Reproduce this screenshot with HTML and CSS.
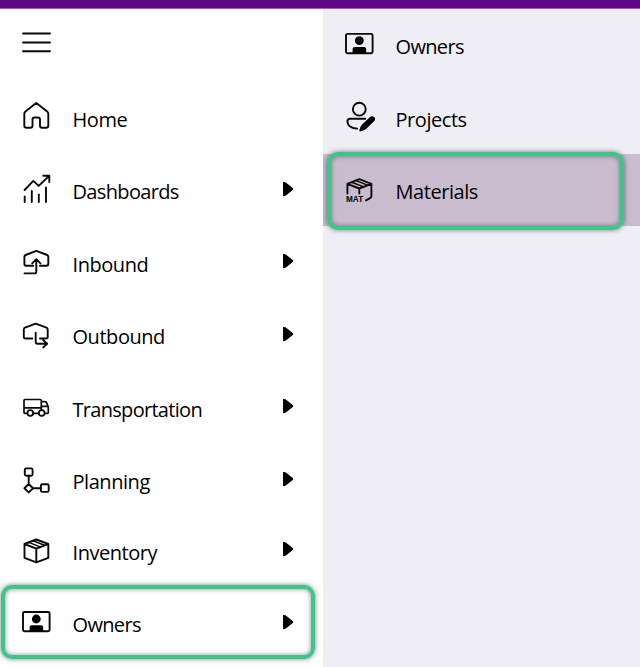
FILE: index.html
```html
<!DOCTYPE html>
<html lang="en">
<head>
<meta charset="utf-8">
<title>Navigation</title>
<link rel="stylesheet" href="styles.css">
</head>
<body>
<div class="topbar"></div>
<div class="menus">
  <nav class="menu primary">
    <div class="item"><svg class="icon" viewBox="0 0 36 36"><path d="M5 6.5H32M5 15.5H32M5 24.2H32"/></svg></div>
    <div class="item even"><svg class="icon" viewBox="0 0 36 36"><path d="M18.3 3 7.4 11.5Q6.3 12.4 6.3 14V25.7Q6.3 27.8 8.4 27.8H12.4Q14.5 27.8 14.5 25.7V19.5Q14.5 17.5 16.5 17.5H20Q22 17.5 22 19.5V25.7Q22 27.8 24.1 27.8H28.1Q30.3 27.8 30.3 25.7V14Q30.3 12.4 29.2 11.5Z"/></svg><span class="label">Home</span></div>
    <div class="item"><svg class="icon" viewBox="0 0 36 36"><path d="M6.7 24.5V30M13.8 19V30M20.8 22.5V30M28 15.5V30M6.6 18 15.3 8.9 20.7 13.9 31 4M25.3 3.8H31.3V10"/></svg><span class="label tight">Dashboards</span><svg class="caret" viewBox="0 0 12 16"><path d="M1 1V15Q3 15.5 4.5 14L11 8.7Q11.6 8 11 7.3L4.5 2Q3 .5 1 1Z"/></svg></div>
    <div class="item even"><svg class="icon" viewBox="0 0 36 36"><path d="M15.3 20.7H8.2Q6.4 20.7 6.4 19V12Q6.4 10.5 7.6 10L18.3 5.9 29.2 10Q30.3 10.5 30.3 12V19Q30.3 20.7 28.5 20.7H22M6.5 28.4H16.6Q18.3 28.4 18.3 26.5V14.5M14.2 18.3 18.3 14.2 22.4 18.3"/></svg><span class="label">Inbound</span><svg class="caret" viewBox="0 0 12 16"><path d="M1 1V15Q3 15.5 4.5 14L11 8.7Q11.6 8 11 7.3L4.5 2Q3 .5 1 1Z"/></svg></div>
    <div class="item"><svg class="icon" viewBox="0 0 36 36"><path d="M14.3 21.5H7.6Q5.8 21.5 5.8 19.7V12.7Q5.8 11.2 7 10.7L17.7 6.6 28.5 10.7Q29.7 11.2 29.7 12.7V19.7Q29.7 21.5 27.9 21.5H22M17.7 15.7V24.8Q17.7 26.7 19.5 26.7H29.2M25.2 23.2 29.2 26.8 25.2 30.4"/></svg><span class="label">Outbound</span><svg class="caret" viewBox="0 0 12 16"><path d="M1 1V15Q3 15.5 4.5 14L11 8.7Q11.6 8 11 7.3L4.5 2Q3 .5 1 1Z"/></svg></div>
    <div class="item even"><svg class="icon thin" viewBox="0 0 36 36"><path d="M9.3 23.3H6.8Q6 23.3 6 22.3V10.5Q6 9.5 7 9.5H22.3Q23.3 9.5 23.3 10.5V19.5M15.3 23.3H20.6M6 17.9H23.3M23.3 11.6H27.2Q28.1 11.6 28.5 12.6L30.3 17V22.3Q30.3 23.3 29.5 23.3H26.8M23.3 16.4H30"/><circle cx="12.3" cy="23" r="2.9"/><circle cx="23.7" cy="23" r="2.9"/></svg><span class="label tighter">Transportation</span><svg class="caret" viewBox="0 0 12 16"><path d="M1 1V15Q3 15.5 4.5 14L11 8.7Q11.6 8 11 7.3L4.5 2Q3 .5 1 1Z"/></svg></div>
    <div class="item short"><svg class="icon" viewBox="0 0 36 36"><rect x="6.8" y="6.4" width="7.8" height="7.4" rx="1.5"/><path d="M10.7 13.8V22M15 26.2H22.7M10.7 22 15 26.2 10.7 30.4 6.4 26.2Z"/><rect x="22.9" y="22.3" width="7.8" height="7.6" rx="1.5"/></svg><span class="label">Planning</span><svg class="caret" viewBox="0 0 12 16"><path d="M1 1V15Q3 15.5 4.5 14L11 8.7Q11.6 8 11 7.3L4.5 2Q3 .5 1 1Z"/></svg></div>
    <div class="item medium"><svg class="icon" viewBox="0 0 36 36"><path d="M18.3 6.5 30.3 11V24.8L18.3 29.3 6.5 24.8V11ZM6.5 11 18.3 15.7 30.3 11M18.3 15.7V29"/><path class="seam" d="M15 7.8 26.5 12.2M10.8 9.4 22.2 13.9"/></svg><span class="label">Inventory</span><svg class="caret high" viewBox="0 0 12 16"><path d="M1 1V15Q3 15.5 4.5 14L11 8.7Q11.6 8 11 7.3L4.5 2Q3 .5 1 1Z"/></svg></div>
    <div class="item medium outlined"><svg class="icon" viewBox="0 0 36 36"><rect x="5" y="7" width="26.6" height="19.3" rx="1.5"/><circle class="fill" cx="18.3" cy="14" r="4.4"/><path class="fill" d="M11.6 26.5V22.4Q11.6 20.2 13.8 20.2H23Q25.2 20.2 25.2 22.4V26.5Z"/></svg><span class="label tight">Owners</span><svg class="caret" viewBox="0 0 12 16"><path d="M1 1V15Q3 15.5 4.5 14L11 8.7Q11.6 8 11 7.3L4.5 2Q3 .5 1 1Z"/></svg></div>
  </nav>
  <nav class="menu secondary">
    <div class="item"><svg class="icon" viewBox="0 0 36 36"><rect x="5" y="6.9" width="26.6" height="19.3" rx="1.5"/><circle class="fill" cx="18.3" cy="13.7" r="4.4"/><path class="fill" d="M11.6 26.2V22.1Q11.6 19.9 13.8 19.9H23Q25.2 19.9 25.2 22.1V26.2Z"/></svg><span class="label tight">Owners</span></div>
    <div class="item even"><svg class="icon" viewBox="0 0 36 36"><circle cx="18.3" cy="9.2" r="6.4"/><path d="M24.3 18.7H9Q6.4 18.7 6.4 21.3C6.4 25.5 10.5 28.2 16.2 28.6"/><path class="fill" d="M28.8 17.2C31.5 14.6 35.9 18.2 33.3 21L25.3 28.8Q23.8 30.2 21.4 30.8L19 31.4Q18 31.2 18.4 30L19.2 27.5Q19.7 25.8 21.2 24.5Z"/></svg><span class="label">Projects</span></div>
    <div class="item active outlined"><svg class="icon" viewBox="0 0 36 36"><path d="M6.4 21.6V11.8L18.3 7.2 30.4 11.8V24Q30.4 25.5 29 26.2L25 28.3M6.4 11.8 18.3 16.5 30.4 11.8M18.3 16.5V21.5"/><path class="seam" d="M15 8.6 26.5 13.1M10.8 10.2 22.2 14.8"/><text class="tag" x="5" y="30" textLength="17.2" lengthAdjust="spacingAndGlyphs">MAT</text></svg><span class="label">Materials</span></div>
  </nav>
</div>
</body>
</html>
```
FILE: styles.css
```css
*,
*::after {
  box-sizing: border-box;
}

body {
  margin: 0;
  height: 667px;
  overflow: hidden;
  display: flex;
  flex-direction: column;
  background: #fff;
  color: #000;
  font: 20px/28px "Open Sans", "Noto Sans", sans-serif;
}

.topbar {
  height: 9px;
  flex: none;
  background: #5f0784;
  border-bottom: 1px solid #9961b0;
}

.menus {
  flex: 1;
  display: grid;
  grid-template-columns: 323px 1fr;
}

.secondary {
  background: #efeef4;
}

.item {
  position: relative;
  display: flex;
  align-items: flex-start;
  height: 73px;
  padding: 18px 29.5px 0 18px;
}

.item.even,
.item.medium,
.item.active {
  height: 72px;
}

.item.short {
  height: 71px;
}

.active {
  background: #c9bccf;
}

.icon {
  width: 36px;
  height: 36px;
  flex: none;
  overflow: visible;
  fill: none;
  stroke: #0a0a0a;
  stroke-width: 1.9;
  stroke-linecap: round;
  stroke-linejoin: round;
}

.thin {
  stroke-width: 1.7;
}

.seam {
  stroke-width: 1.5;
}

.icon .fill {
  fill: #000;
  stroke: none;
}

.tag {
  fill: #000;
  stroke: none;
  font: bold 9px "Liberation Sans", sans-serif;
}

.label {
  margin: 6px 0 0 18.5px;
  white-space: nowrap;
  letter-spacing: -0.45px;
}

.tight {
  letter-spacing: -0.65px;
}

.tighter {
  letter-spacing: -0.7px;
}

.caret {
  width: 12px;
  height: 16px;
  margin: 9px 0 0 auto;
  fill: #000;
}

.even .caret,
.caret.high {
  margin-top: 8px;
}

.outlined::after {
  content: "";
  position: absolute;
  top: -2px;
  left: 1px;
  width: 314px;
  height: 74px;
  border: 4px solid #3cc68a;
  border-radius: 11px;
  box-shadow: 0 0 5px rgba(0, 0, 0, 0.5), inset 0 0 5px rgba(0, 0, 0, 0.45);
}

.secondary .outlined::after {
  left: 4px;
  width: 297px;
  height: 78px;
}
```
